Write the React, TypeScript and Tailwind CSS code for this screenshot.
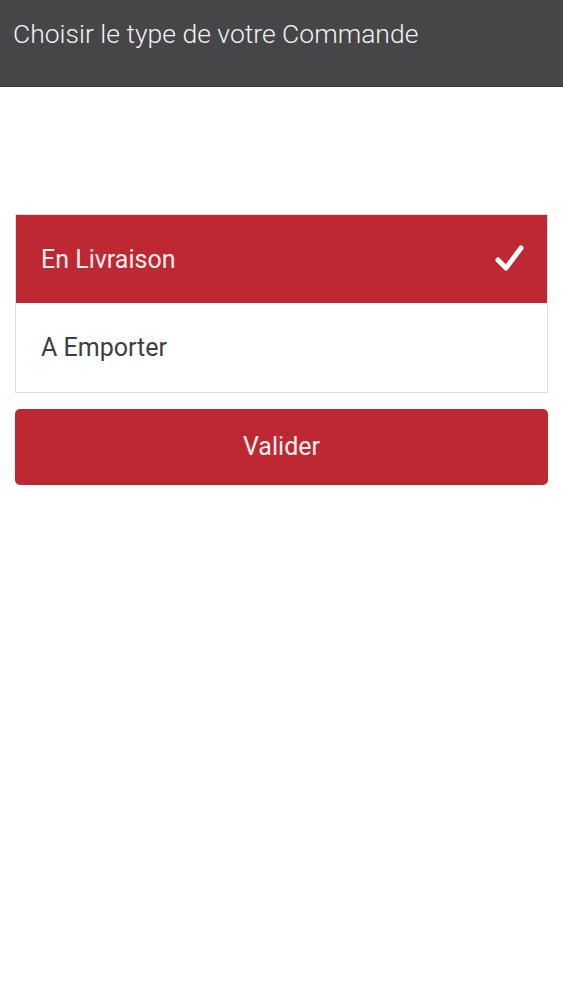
import React from "react";

export default function App() {
  return (
    <div className="min-h-[1000px] bg-white" style={{ fontFamily: "Roboto, 'Liberation Sans', sans-serif" }}>
      <header className="h-[87px] bg-[#464547] border-b border-[#3a393b] flex items-start pt-[16px] pl-[13px]">
        <h1 className="text-[26.5px] font-light text-[#f2f2f2] leading-[36px]">
          Choisir le type de votre Commande
        </h1>
      </header>
      <main className="pt-[127px] px-[15px] flex flex-col gap-[16px]">
        <div className="border border-[#dedede] flex flex-col">
          <div className="h-[88px] bg-[#be2833] flex items-center justify-between pl-[25px] pr-[20px]">
            <span className="text-[25px] text-[#fbeeee] leading-none">En Livraison</span>
            <svg width="34" height="34" viewBox="0 0 34 34" fill="none">
              <path d="M5 18 L13 26 L28 6" stroke="#ffffff" strokeWidth="5" strokeLinecap="round" strokeLinejoin="round" />
            </svg>
          </div>
          <div className="h-[89px] bg-white flex items-center pl-[25px]">
            <span className="text-[25px] text-[#3e3e40] leading-none">A Emporter</span>
          </div>
        </div>
        <button className="h-[76px] rounded-[5px] bg-[#be2833] text-[#fbeeee] text-[25px] flex items-center justify-center">
          Valider
        </button>
      </main>
    </div>
  );
}
